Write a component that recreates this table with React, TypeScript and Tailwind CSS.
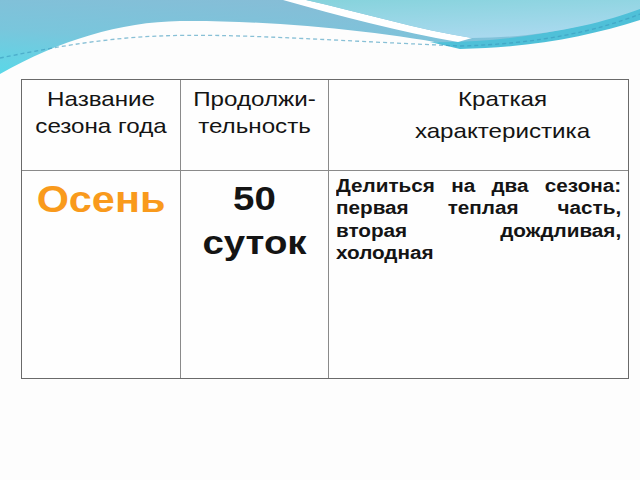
import React from "react";

// Slide: "Осень" season table on white with a blue wave banner at the top.

function Waves() {
  return (
    <svg
      className="absolute left-0 top-0"
      width="640"
      height="80"
      viewBox="0 0 640 80"
    >
      <defs>
        <linearGradient id="blue" x1="0" y1="1" x2="0.6" y2="0">
          <stop offset="0" stopColor="#5ad8e8" />
          <stop offset="0.45" stopColor="#79c6dc" />
          <stop offset="1" stopColor="#88bcd6" />
        </linearGradient>
        <linearGradient id="light" x1="0" y1="0" x2="0.4" y2="1">
          <stop offset="0" stopColor="#86d3dc" />
          <stop offset="1" stopColor="#a8d9ee" />
        </linearGradient>
      </defs>
      {/* main blue body */}
      <path
        d="M0,0 H640 V12 C590,30 530,46 460,47 C380,30 260,20 180,21 C120,22 60,40 0,74 Z"
        fill="url(#blue)"
      />
      {/* darker band on the right */}
      <path
        d="M430,42 C500,44 580,30 640,8 V20 C590,36 530,48 460,49 Z"
        fill="#4fc0d8"
      />
      {/* white stripe */}
      <path
        d="M306,0 C360,12 420,30 472,38 L458,42 C400,32 340,16 283,0 Z"
        fill="#ffffff"
      />
      {/* light cyan region */}
      <path
        d="M306,0 H640 V9 C600,24 540,38 472,38 C420,30 360,12 306,0 Z"
        fill="url(#light)"
      />
      {/* dotted line */}
      <path
        d="M0,58 C40,50 100,38 160,36 C230,33 320,40 460,46 C540,44 600,30 640,14"
        fill="none"
        stroke="#3a98bd"
        strokeWidth="1.3"
        strokeDasharray="4 3"
        opacity="0.6"
      />
    </svg>
  );
}

export default function App() {
  return (
    <div className="relative w-[640px] h-[480px] overflow-hidden bg-[#fdfdfd] font-['Liberation_Sans',Arial,sans-serif] text-[#141414]">
      <Waves />

      <div className="relative ml-[21px] pt-[79px]">
        <div className="grid grid-cols-[159px_148px_299px] w-[608px] border border-[#6a6a6a] bg-white/40">
          {/* header row */}
          <div className="h-[91px] border-r border-b border-[#8a8a8a] pt-[5px] text-center">
            <div className="scale-x-[1.15] text-[21px] leading-[27px]">
              Название
              <br />
              сезона года
            </div>
          </div>
          <div className="h-[91px] border-r border-b border-[#8a8a8a] pt-[5px] text-center">
            <div className="scale-x-[1.15] text-[21px] leading-[27px]">
              Продолжи-
              <br />
              тельность
            </div>
          </div>
          <div className="h-[91px] border-b border-[#8a8a8a] pt-[3px] pl-[48px] text-center">
            <div className="scale-x-[1.15] text-[21px] leading-[32px]">
              Краткая
              <br />
              характеристика
            </div>
          </div>

          {/* body row */}
          <div className="h-[207px] border-r border-[#8a8a8a] pt-[11px] text-center">
            <div className="scale-x-[1.15] text-[36px] leading-[36px] font-bold text-[#f99a1c]">
              Осень
            </div>
          </div>
          <div className="h-[207px] border-r border-[#8a8a8a] pt-[5px] text-center">
            <div className="scale-x-[1.13] text-[34px] leading-[44px] font-bold">
              50
              <br />
              суток
            </div>
          </div>
          <div className="h-[207px] pt-[4px] pl-[7px]">
            <div className="w-[248px] origin-left scale-x-[1.15] text-justify text-[18px] leading-[22.4px] font-bold">
              Делиться на два сезона: первая теплая часть, вторая дождливая,
              холодная
            </div>
          </div>
        </div>
      </div>
    </div>
  );
}
